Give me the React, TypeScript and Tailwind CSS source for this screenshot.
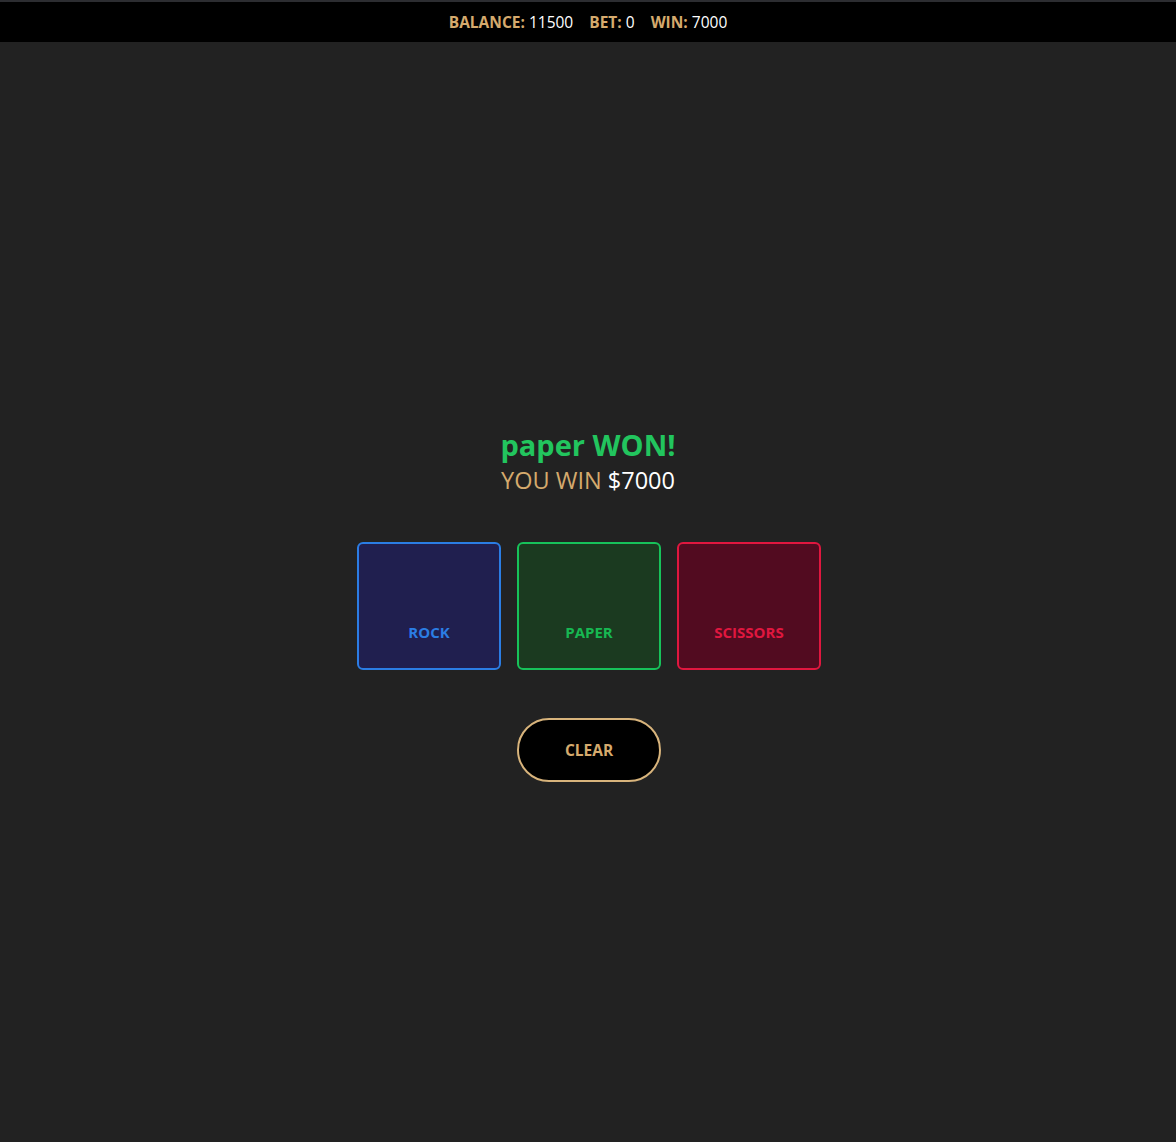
import React from "react";

export default function App() {
  const font = { fontFamily: '"Open Sans", "Noto Sans", sans-serif' };
  return (
    <div className="min-h-[1142px] bg-[#222222] flex flex-col" style={font}>
      <div className="border-t-2 border-[#2c2d31] bg-black h-[42px] pt-[1px] flex items-center justify-center gap-[16px] text-[15.5px] text-white">
        <span>
          <b className="text-[#d5aa6d] font-bold">BALANCE:</b> 11500
        </span>
        <span>
          <b className="text-[#d5aa6d] font-bold">BET:</b> 0
        </span>
        <span>
          <b className="text-[#d5aa6d] font-bold">WIN:</b> 7000
        </span>
      </div>
      <div className="flex flex-col items-center pt-[386px]">
        <div className="text-[29px] leading-[34px] font-bold text-[#22c55e]">paper WON!</div>
        <div className="mt-[3px] text-[23.5px] leading-[30px]">
          <span className="text-[#d5aa6d]">YOU WIN</span> <span className="text-white">$7000</span>
        </div>
        <div className="flex gap-4 mt-[47px] pl-[2px]">
          <button className="w-[144px] h-[128px] rounded-md border-2 border-[#2b7de4] bg-[#201f4f] flex items-end justify-center pb-[25px] text-[15px] font-bold text-[#2b7de4]">
            ROCK
          </button>
          <button className="w-[144px] h-[128px] rounded-md border-2 border-[#17c25a] bg-[#1b3a20] flex items-end justify-center pb-[25px] text-[15px] font-bold text-[#17b852]">
            PAPER
          </button>
          <button className="w-[144px] h-[128px] rounded-md border-2 border-[#e0173f] bg-[#520b20] flex items-end justify-center pb-[25px] text-[15px] font-bold text-[#e0173f]">
            SCISSORS
          </button>
        </div>
        <button className="mt-[48px] ml-[2px] w-[144px] h-[64px] pt-[2px] rounded-full border-2 border-[#d8b47c] bg-black text-[15.5px] font-bold text-[#d5aa6d]">
          CLEAR
        </button>
      </div>
    </div>
  );
}
